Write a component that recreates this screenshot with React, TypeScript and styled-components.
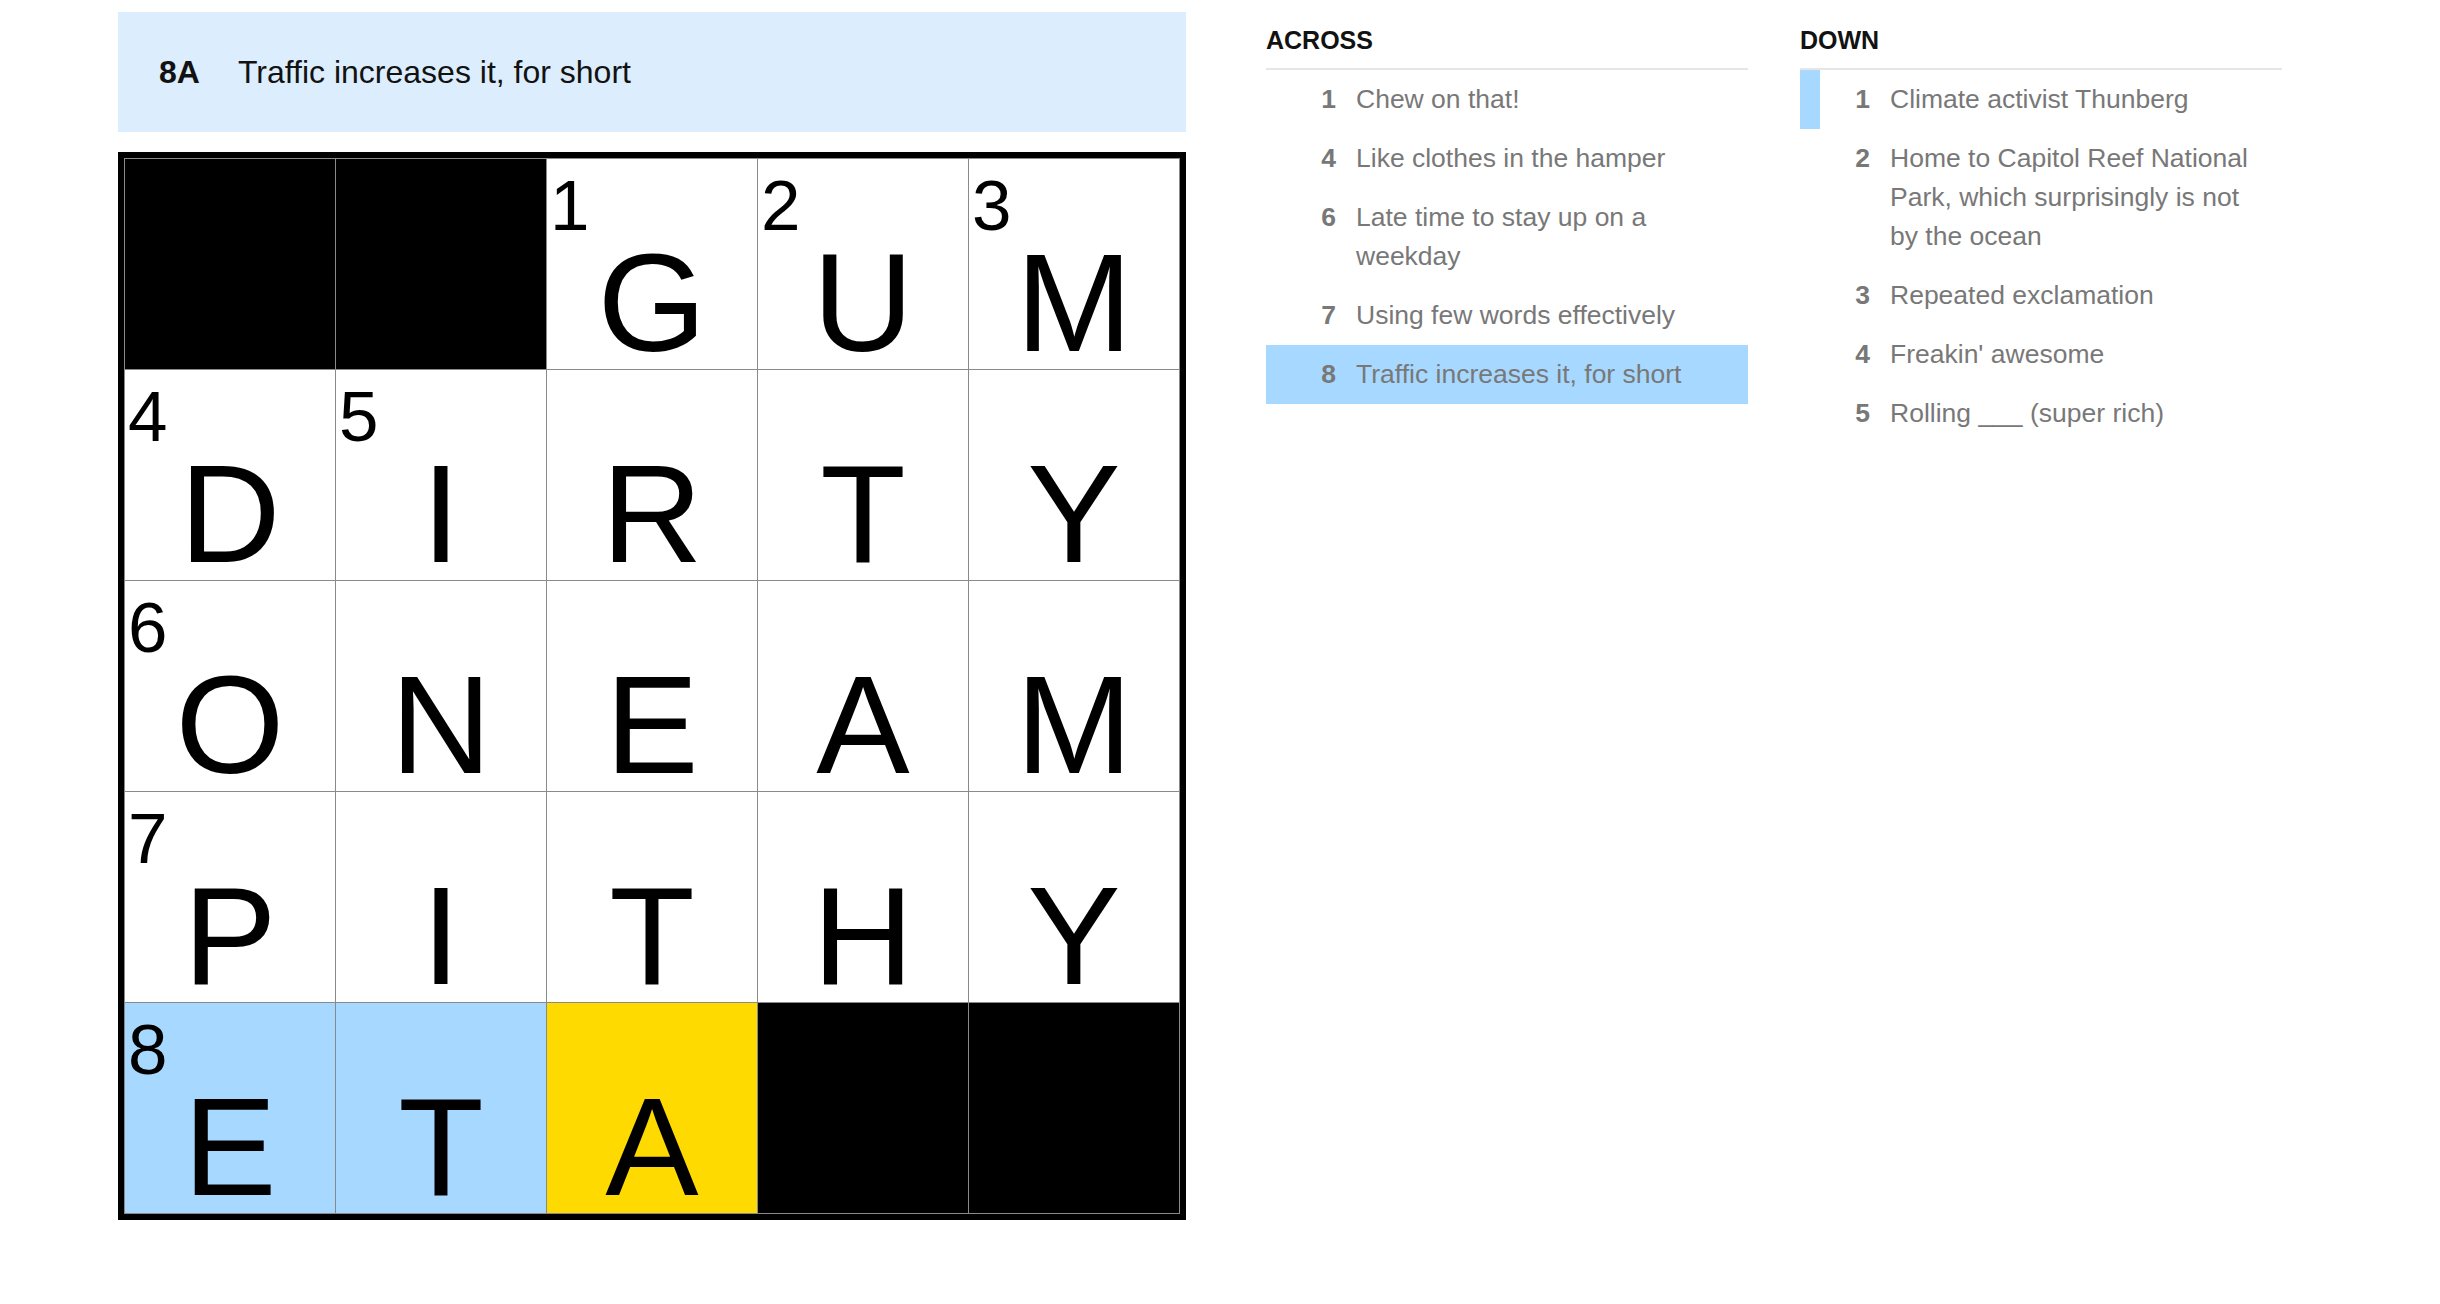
import React from "react";
import styled, { createGlobalStyle } from "styled-components";

type CellKind = "block" | "open" | "word" | "active";

interface CellData {
  letter: string;
  num?: number;
  kind: CellKind;
}

interface Clue {
  num: number;
  text: string;
  mark?: "current" | "related";
}

const rows = ["##GUM", "DIRTY", "ONEAM", "PITHY", "ETA##"];

const numbers: Record<string, number> = {
  "0-2": 1,
  "0-3": 2,
  "0-4": 3,
  "1-0": 4,
  "1-1": 5,
  "2-0": 6,
  "3-0": 7,
  "4-0": 8,
};

const kindOf = (r: number, c: number, ch: string): CellKind => {
  if (ch === "#") return "block";
  if (r === 4 && c === 2) return "active";
  if (r === 4) return "word";
  return "open";
};

const cells: CellData[] = rows.flatMap((row, r) =>
  row.split("").map((ch, c) => ({
    letter: ch === "#" ? "" : ch,
    num: numbers[`${r}-${c}`],
    kind: kindOf(r, c, ch),
  }))
);

const across: Clue[] = [
  { num: 1, text: "Chew on that!" },
  { num: 4, text: "Like clothes in the hamper" },
  { num: 6, text: "Late time to stay up on a weekday" },
  { num: 7, text: "Using few words effectively" },
  { num: 8, text: "Traffic increases it, for short", mark: "current" },
];

const down: Clue[] = [
  { num: 1, text: "Climate activist Thunberg", mark: "related" },
  { num: 2, text: "Home to Capitol Reef National Park, which surprisingly is not by the ocean" },
  { num: 3, text: "Repeated exclamation" },
  { num: 4, text: "Freakin' awesome" },
  { num: 5, text: "Rolling ___ (super rich)" },
];

const App: React.FC = () => {
  return (
    <>
      <GlobalStyle />
      <Layout>
        <PuzzleArea>
          <ClueBar>
            <ClueBarLabel>8A</ClueBarLabel>
            <ClueBarText>Traffic increases it, for short</ClueBarText>
          </ClueBar>
          <Board>
            {cells.map((cell, i) => (
              <Cell key={i} $kind={cell.kind}>
                {cell.num && <CellNum>{cell.num}</CellNum>}
                <Letter>{cell.letter}</Letter>
              </Cell>
            ))}
          </Board>
        </PuzzleArea>
        <ClueLists>
          <ClueColumn title="ACROSS" clues={across} />
          <ClueColumn title="DOWN" clues={down} />
        </ClueLists>
      </Layout>
    </>
  );
};

const ClueColumn: React.FC<{ title: string; clues: Clue[] }> = ({ title, clues }) => (
  <Column>
    <ColumnTitle>{title}</ColumnTitle>
    <List>
      {clues.map((clue) => (
        <Item key={clue.num} $mark={clue.mark}>
          <ItemNum>{clue.num}</ItemNum>
          <ItemText>{clue.text}</ItemText>
        </Item>
      ))}
    </List>
  </Column>
);

export default App;

const GlobalStyle = createGlobalStyle`
  html, body {
    margin: 0;
    padding: 0;
    background: #ffffff;
  }
  body {
    font-family: "Liberation Sans", Arial, sans-serif;
    color: #121212;
  }
`;

const Layout = styled.div`
  display: flex;
  align-items: flex-start;
  gap: 80px;
  padding: 12px 0 0 118px;
  min-height: 1304px;
  box-sizing: border-box;
`;

const PuzzleArea = styled.div`
  display: flex;
  flex-direction: column;
  gap: 20px;
  width: 1068px;
`;

const ClueBar = styled.div`
  display: flex;
  align-items: center;
  height: 120px;
  padding-left: 41px;
  background-color: #dcedfd;
  font-size: 32px;
`;

const ClueBarLabel = styled.span`
  font-weight: 700;
  margin-right: 38px;
`;

const ClueBarText = styled.span`
  color: #121212;
`;

const Board = styled.div`
  display: grid;
  grid-template-columns: repeat(5, 210px);
  grid-auto-rows: 210px;
  gap: 1px;
  padding: 1px;
  background-color: #8a8a8a;
  border: 6px solid #000000;
`;

const cellColors: Record<CellKind, string> = {
  block: "#000000",
  open: "#ffffff",
  word: "#a7d8ff",
  active: "#ffda00",
};

const Cell = styled.div<{ $kind: CellKind }>`
  position: relative;
  display: flex;
  align-items: flex-end;
  justify-content: center;
  background-color: ${(p) => cellColors[p.$kind]};
`;

const CellNum = styled.span`
  position: absolute;
  top: 11px;
  left: 3px;
  font-size: 71px;
  line-height: 1;
  color: #000000;
`;

const Letter = styled.span`
  font-size: 140px;
  line-height: 133px;
  color: #000000;
`;

const ClueLists = styled.div`
  display: flex;
  gap: 52px;
`;

const Column = styled.section`
  width: 482px;
`;

const ColumnTitle = styled.h3`
  margin: 13px 0 0;
  padding-bottom: 13px;
  border-bottom: 2px solid #e6e6e6;
  font-size: 25px;
  line-height: 30px;
  font-weight: 700;
  color: #121212;
`;

const List = styled.ol`
  list-style: none;
  margin: 0;
  padding: 0;
`;

const Item = styled.li<{ $mark?: "current" | "related" }>`
  display: flex;
  align-items: flex-start;
  padding: 10px 24px 10px 0;
  font-size: 26.5px;
  line-height: 39px;
  color: #787878;
  background-color: ${(p) => (p.$mark === "current" ? "#a7d8ff" : "transparent")};
  box-shadow: ${(p) => (p.$mark === "related" ? "inset 20px 0 0 #a7d8ff" : "none")};
`;

const ItemNum = styled.span`
  flex: 0 0 70px;
  margin-right: 20px;
  text-align: right;
  font-weight: 700;
`;

const ItemText = styled.span`
  flex: 1;
`;
